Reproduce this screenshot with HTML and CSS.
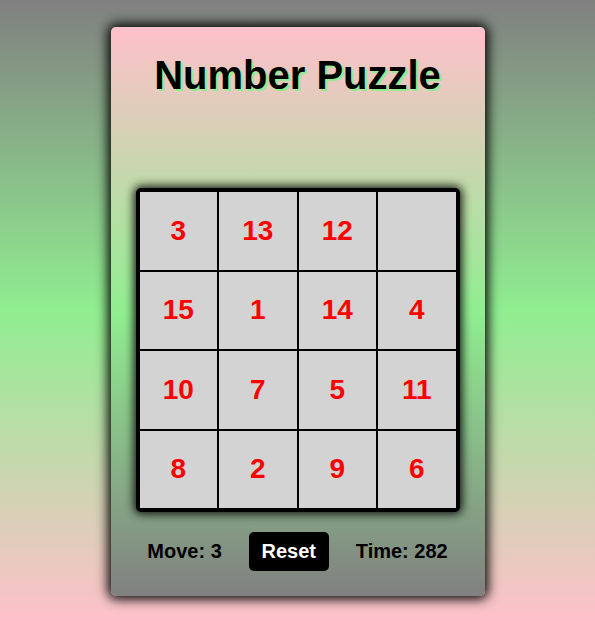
FILE: index.html
```html
<!DOCTYPE html>
<html>
<head>
<meta charset="utf-8">
<link rel="stylesheet" href="styles.css">
</head>
<body>
<div class="card">
  <h1 class="title">Number Puzzle</h1>
  <div class="grid">
    <div class="cell">3</div><div class="cell">13</div><div class="cell">12</div><div class="cell empty"></div>
    <div class="cell">15</div><div class="cell">1</div><div class="cell">14</div><div class="cell">4</div>
    <div class="cell">10</div><div class="cell">7</div><div class="cell">5</div><div class="cell">11</div>
    <div class="cell">8</div><div class="cell">2</div><div class="cell">9</div><div class="cell">6</div>
  </div>
  <div class="controls">
    <span class="stat">Move: 3</span>
    <button class="reset">Reset</button>
    <span class="stat">Time: 282</span>
  </div>
</div>
</body>
</html>
```
FILE: styles.css
```css
html, body {
  margin: 0;
  padding: 0;
}
body {
  min-height: 100vh;
  display: flex;
  align-items: center;
  justify-content: center;
  background: linear-gradient(to bottom, #808080 0%, #90ee90 50%, #ffc0cb 100%);
  font-family: "Liberation Sans", Arial, sans-serif;
}
.card {
  box-sizing: border-box;
  width: 374px;
  height: 569px;
  padding: 25px 25px 25px;
  border-radius: 5px;
  background: linear-gradient(to bottom, #ffc0cb 0%, #90ee90 50%, #808080 100%);
  box-shadow: 0 0 12px 3px rgba(0,0,0,1);
  display: flex;
  flex-direction: column;
}
.title {
  flex-shrink: 0;
  margin: 0;
  height: 136px;
  font-size: 40px;
  line-height: 46px;
  font-weight: bold;
  text-align: center;
  color: #000;
  text-shadow: 2px 2px 0 #90ee90;
}
.grid {
  flex-shrink: 0;
  box-sizing: border-box;
  width: 324px;
  height: 324px;
  border: 3px solid #000;
  border-radius: 5px;
  display: grid;
  grid-template-columns: repeat(4, 1fr);
  grid-template-rows: repeat(4, 1fr);
  box-shadow: 0 0 10px 2px rgba(0,0,0,0.9);
  background: #d3d3d3;
}
.cell {
  border: 1px solid #000;
  background: #d3d3d3;
  color: #ff0000;
  font-weight: bold;
  font-size: 28px;
  display: flex;
  align-items: center;
  justify-content: center;
}
.controls {
  flex-shrink: 0;
  margin-top: 20px;
  display: flex;
  align-items: center;
  justify-content: center;
  gap: 27px;
}
.stat {
  font-size: 20px;
  font-weight: bold;
  color: #000;
}
.reset {
  width: 80px;
  height: 39px;
  padding: 0;
  border: none;
  border-radius: 5px;
  background: #000;
  color: #fff;
  font-family: "Liberation Sans", Arial, sans-serif;
  font-size: 20px;
  font-weight: bold;
}
```
